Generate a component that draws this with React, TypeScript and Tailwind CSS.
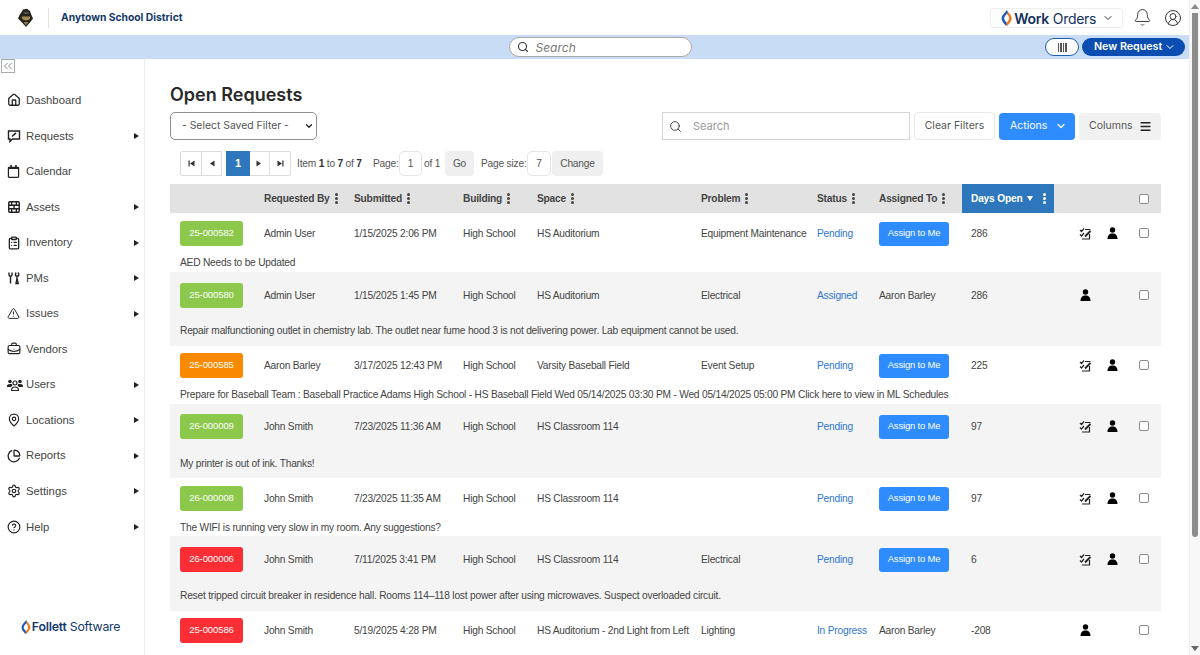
import React from "react"
import {
  House,
  BrickWall,
  ClipboardList,
  TriangleAlert,
  BriefcaseBusiness,
  MapPin,
  ChartPie,
  Settings,
  CircleHelp,
  Search,
  ChevronDown,
  ChevronsLeft,
  Bell,
  CircleUserRound,
  Menu,
} from "lucide-react"
import { FaRegCalendar } from "react-icons/fa"

const arial = "font-['Liberation_Sans',Arial,sans-serif]"
const inter = "font-['Inter',sans-serif]"
const gridCols = "grid grid-cols-[94px_90px_109px_74px_164px_116px_62px_83px_92px_76px_31px]"

const RequestIcon = () => (
  <svg width="14" height="14" viewBox="0 0 14 14" fill="none" stroke="#222" strokeWidth="1.4">
    <path d="M1.500 2h11v8H5.500L3 12.500V10H1.500z" />
    <path d="M5 7.500 9 3.800" strokeWidth="1.600" />
  </svg>
)

const WrenchIcon = () => (
  <svg width="14" height="14" viewBox="0 0 14 14" fill="none" stroke="#222" strokeWidth="1.400">
    <path d="M2 1.500v2.200c0 1 .7 1.500 1.500 1.500S5 4.700 5 3.700V1.500M3.500 5.200v7.300" />
    <path d="M9 1.500 8.400 3.500c0 1 .7 1.800 1.600 1.800s1.800-.8 1.800-1.800L11.200 1.500M10 5.300v2.200l-1 5h2.200l-1.200-5" />
  </svg>
)

const UsersIcon = () => (
  <svg width="16" height="14" viewBox="0 0 16 14" fill="#222">
    <circle cx="3" cy="3.500" r="1.800" />
    <circle cx="13" cy="3.500" r="1.800" />
    <path d="M0 8.500c0-1.800 1-2.500 3-2.500s2.500.6 2.500 1.200L4 9H0zM16 8.500c0-1.800-1-2.500-3-2.500s-2.500.6-2.500 1.200L12 9h4z" />
    <circle cx="8" cy="5" r="2" fill="none" stroke="#222" strokeWidth="1.200" />
    <path d="M4.500 12.500c0-2.500 1.500-3.500 3.500-3.500s3.500 1 3.500 3.500z" fill="none" stroke="#222" strokeWidth="1.200" />
  </svg>
)

const FlameLogo = ({ h }: { h: number }) => (
  <svg width={h * 0.7} height={h} viewBox="0 0 11 16">
    <path d="M6 0C3.500 3 .5 5.500.5 8.500.5 11 3 14 5 16l1.500-2.500C5 12 3 10.300 3 8.500 3 6.500 5 4.500 7 3z" fill="#1e5bb8" />
    <path d="M5.500 3.500 7 2c2 2 3.500 4 3.500 6.500S8 14 6 16l-1-2.500C6.500 12 8 10.300 8 8.500 8 6.500 6.800 5 5.500 3.500z" fill="#f2791f" />
  </svg>
)

const navItems = [
  { label: "Dashboard", icon: <House size={14} strokeWidth={2.200} />, arrow: false },
  { label: "Requests", icon: <RequestIcon />, arrow: true },
  { label: "Calendar", icon: <FaRegCalendar size={13} />, arrow: false },
  { label: "Assets", icon: <BrickWall size={14} strokeWidth={2.400} />, arrow: true },
  { label: "Inventory", icon: <ClipboardList size={14} strokeWidth={2.200} />, arrow: true },
  { label: "PMs", icon: <WrenchIcon />, arrow: true },
  { label: "Issues", icon: <TriangleAlert size={13} strokeWidth={1.800} />, arrow: true },
  { label: "Vendors", icon: <BriefcaseBusiness size={14} strokeWidth={2} />, arrow: false },
  { label: "Users", icon: <UsersIcon />, arrow: true },
  { label: "Locations", icon: <MapPin size={14} strokeWidth={2} />, arrow: true },
  { label: "Reports", icon: <ChartPie size={14} strokeWidth={2.200} />, arrow: true },
  { label: "Settings", icon: <Settings size={14} strokeWidth={2} />, arrow: true },
  { label: "Help", icon: <CircleHelp size={14} strokeWidth={2} />, arrow: true },
]

const requests = [
  { id: "25-000582", color: "bg-[#8cc84b]", by: "Admin User", date: "1/15/2025 2:06 PM", space: "HS Auditorium", problem: "Equipment Maintenance", status: "Pending", assigned: "", days: "286", note: "AED Needs to be Updated", row: "h-[59px] pt-2", gap: "mt-[9px]" },
  { id: "25-000580", color: "bg-[#8cc84b]", by: "Admin User", date: "1/15/2025 1:45 PM", space: "HS Auditorium", problem: "Electrical", status: "Assigned", assigned: "Aaron Barley", days: "286", note: "Repair malfunctioning outlet in chemistry lab. The outlet near fume hood 3 is not delivering power. Lab equipment cannot be used.", row: "h-[74px] pt-[11px] bg-[#f4f4f4]", gap: "mt-[15px]" },
  { id: "25-000585", color: "bg-[#f98a00]", by: "Aaron Barley", date: "3/17/2025 12:43 PM", space: "Varsity Baseball Field", problem: "Event Setup", status: "Pending", assigned: "", days: "225", note: "Prepare for Baseball Team : Baseball Practice Adams High School - HS Baseball Field Wed 05/14/2025 03:30 PM - Wed 05/14/2025 05:00 PM Click here to view in ML Schedules", row: "h-[58px] pt-[7px]", gap: "mt-[9px]" },
  { id: "26-000009", color: "bg-[#8cc84b]", by: "John Smith", date: "7/23/2025 11:36 AM", space: "HS Classroom 114", problem: "", status: "Pending", assigned: "", days: "97", note: "My printer is out of ink. Thanks!", row: "h-[74px] pt-[10px] bg-[#f4f4f4]", gap: "mt-[17px]" },
  { id: "26-000008", color: "bg-[#8cc84b]", by: "John Smith", date: "7/23/2025 11:35 AM", space: "HS Classroom 114", problem: "", status: "Pending", assigned: "", days: "97", note: "The WIFI is running very slow in my room. Any suggestions?", row: "h-[58px] pt-2", gap: "mt-[9px]" },
  { id: "26-000006", color: "bg-[#fb2d35]", by: "John Smith", date: "7/11/2025 3:41 PM", space: "HS Classroom 114", problem: "Electrical", status: "Pending", assigned: "", days: "6", note: "Reset tripped circuit breaker in residence hall. Rooms 114–118 lost power after using microwaves. Suspect overloaded circuit.", row: "h-[75px] pt-[11px] bg-[#f4f4f4]", gap: "mt-4" },
  { id: "25-000586", color: "bg-[#fb2d35]", by: "John Smith", date: "5/19/2025 4:28 PM", space: "HS Auditorium - 2nd Light from Left", problem: "Lighting", status: "In Progress", assigned: "Aaron Barley", days: "-208", note: "", row: "h-[44px] pt-[7px]", gap: "mt-0" },
]

const Dots = ({ color = "bg-[#444]", className = "ml-[5px]" }: { color?: string; className?: string }) => (
  <span className={`inline-flex flex-col gap-[1.500px] align-middle ${className}`}>
    <span className={`w-[3px] h-[2.500px] rounded-full ${color}`} />
    <span className={`w-[3px] h-[2.500px] rounded-full ${color}`} />
    <span className={`w-[3px] h-[2.500px] rounded-full ${color}`} />
  </span>
)

const Header = ({ label }: { label: string }) => (
  <div className="flex items-center text-[10.200px] tracking-[-0.2px] font-bold text-[#444]">
    {label}
    <Dots />
  </div>
)

const Check = () => <span className="block w-[10px] h-[10px] border border-[#8b8b8b] rounded-[2px] bg-white" />

const PersonIcon = () => (
  <svg width="11" height="12" viewBox="0 0 11 12" fill="#000">
    <circle cx="5.500" cy="3" r="2.700" />
    <path d="M0.500 12c0-3.500 1.800-5.500 5-5.500s5 2 5 5.500z" />
  </svg>
)

const TaskIcon = () => (
  <svg width="13" height="13" viewBox="0 0 13 13" fill="none" stroke="#222" strokeWidth="1.200">
    <path d="M1 3 2.500 4.500 5 1.500M6 2.500h5.500M1 7.500 2.500 9 5 6" />
    <path d="M3 12h7.500V7" />
    <path d="M6 9.500 11.500 3.800" strokeWidth="1.900" />
  </svg>
)

const PagerGlyph = ({ dir, bar }: { dir: "left" | "right"; bar?: boolean }) => (
  <svg width="7" height="7" viewBox="0 0 7 7" fill="#333">
    {dir === "left" ? <path d="M6.500 0.500v6L2 3.500z" /> : <path d="M.5 0.500v6L5 3.500z" />}
    {bar && (dir === "left" ? <path d="M.5 .5h1.200v6H.5z" /> : <path d="M5.300 .5h1.200v6H5.300z" />)}
  </svg>
)

const Pager = ({ children, className = "" }: { children: React.ReactNode; className?: string }) => (
  <div className={`h-[25px] flex items-center justify-center border border-[#dcdcdc] ${className}`}>
    {children}
  </div>
)

export default function App() {
  return (
    <div className={`w-[1200px] h-[655px] overflow-hidden flex bg-white ${arial}`}>
      <div className="w-[1189px] flex flex-col">
        {/* top header */}
        <div className="h-[35px] flex items-center pl-[17px] pr-[7px]">
          <svg width="18" height="20" viewBox="0 0 18 20">
            <path d="M4 5 6 1.500l4-.8 3 2.300 1 3 2 4.500-3 4-4 4.500-4-4.500-4-4 2-4.500z" fill="#26231d" />
            <path d="M4.500 8.500h9l-1 3-3.500 1-3.500-1z" fill="#a08a55" />
            <path d="M6.500 14h5L9 17.500z" fill="#8d7a4a" />
            <path d="M6.500 4h5v2h-5z" fill="#57513f" />
          </svg>
          <div className="w-px h-[20px] bg-[#e3e3e3] ml-[13px]" />
          <div className={`ml-[12px] text-[10.300px] font-bold text-[#14386b] ${inter}`}>Anytown School District</div>
          <div className={`ml-auto w-[133px] h-[20px] mt-[1px] border border-[#eeeeee] rounded-[3px] flex items-center pl-[10px] ${inter}`}>
            <FlameLogo h={16} />
            <span className="ml-[2px] text-[14px] tracking-[-0.3px] font-semibold text-[#12305c]">Work</span>
            <span className="ml-[4px] text-[14px] tracking-[-0.3px] text-[#12305c]">Orders</span>
            <ChevronDown size={12} className="ml-[6px] text-[#333]" />
          </div>
          <Bell size={19} strokeWidth={1.200} className="ml-[10px] text-[#333]" />
          <CircleUserRound size={18} strokeWidth={1.300} className="ml-[12px] text-[#333]" />
        </div>
        {/* search bar */}
        <div className="h-[24px] bg-[#c9dcf5] relative flex items-center justify-center">
          <div className={`w-[183px] h-[20px] rounded-full bg-white border border-[#a8a8a8] flex items-center pl-[7px] ml-[11px] ${inter}`}>
            <Search size={12} strokeWidth={2.200} className="text-[#333]" />
            <span className="ml-[7px] mt-[2px] text-[12px] italic text-[#777]">Search</span>
          </div>
          <div className="absolute right-[4px] top-[3px] flex items-center gap-[3px]">
            <div className="w-[34px] h-[18px] rounded-full bg-white border border-[#1f5fae] flex justify-center items-center">
              <div className="flex gap-px">
                <span className="w-[1.500px] h-[9px] bg-[#555]" />
                <span className="w-[1.500px] h-[9px] bg-[#555]" />
                <span className="w-[1.500px] h-[9px] bg-[#555]" />
                <span className="w-[1.500px] h-[9px] bg-[#555]" />
              </div>
            </div>
            <div className={`w-[103px] h-[18px] rounded-full bg-[#0b4db0] text-white text-[10.700px] font-semibold flex items-center pl-[12px] ${inter}`}>
              New Request
              <ChevronDown size={12} strokeWidth={2} className="ml-[2px]" />
            </div>
          </div>
        </div>
        <div className="flex-1 flex min-h-0">
          {/* sidebar */}
          <div className="w-[145px] border-r border-[#ececec] flex flex-col relative shrink-0">
            <div className="w-[14px] h-[14px] border border-[#aaa] text-[#666] flex items-center justify-center ml-px">
              <ChevronsLeft size={14} strokeWidth={1.300} className="shrink-0" />
            </div>
            <div className="mt-[9.700px] flex flex-col">
              {navItems.map((n) => (
                <div key={n.label} className="h-[35.560px] flex items-center pl-[7px] text-[11.300px] text-[#444]">
                  <span className="w-[19px] flex text-[#222]">{n.icon}</span>
                  <span>{n.label}</span>
                  {n.arrow && <span className="ml-auto mr-[5px] border-l-[5px] border-l-[#222] border-y-[3px] border-y-transparent" />}
                </div>
              ))}
            </div>
            <div className={`absolute left-[21px] top-[559px] flex items-center text-[#14386b] ${inter}`}>
              <FlameLogo h={14} />
              <span className="ml-[1px] text-[12.300px] font-semibold tracking-[-0.2px]">Follett</span>
              <span className="ml-[3px] text-[12.300px] tracking-[-0.2px]">Software</span>
            </div>
          </div>
          {/* main content */}
          <div className="flex-1 pl-[25px] pr-[28px] min-w-0">
            <div className={`mt-[24px] text-[18px] leading-[23px] font-semibold text-[#2a2a2a] ${inter}`}>Open Requests</div>
            <div className="mt-[6px] flex items-start">
              <div className={`w-[147px] h-[28px] border border-[#8f8f8f] rounded-[5px] flex items-center pl-[11px] whitespace-nowrap text-[10.400px] text-[#555] ${inter}`}>
                - Select Saved Filter -
                <ChevronDown size={10} strokeWidth={3} className="ml-auto mr-[2px] text-[#222]" />
              </div>
              <div className="ml-auto flex items-center">
                <div className={`w-[248px] h-[28px] border border-[#d6d6d6] flex items-center pl-[6px] text-[11px] text-[#999] ${inter}`}>
                  <Search size={13} strokeWidth={1.800} className="text-[#444]" />
                  <span className="ml-[11px]">Search</span>
                </div>
                <div className={`ml-[4px] w-[81px] h-[28px] border border-[#e8e8e8] rounded-[4px] flex items-center justify-center text-[10.500px] text-[#555] ${inter}`}>Clear Filters</div>
                <div className={`ml-[4px] w-[76px] h-[27px] rounded-[4px] bg-[#2e8cff] text-white flex items-center pl-[11px] text-[10.500px] ${inter}`}>
                  Actions
                  <ChevronDown size={12} strokeWidth={2.500} className="ml-[8px]" />
                </div>
                <div className={`ml-[4px] w-[82px] h-[27px] rounded-[4px] bg-[#f1f1f1] text-[#555] flex items-center pl-[10px] text-[10.500px] ${inter}`}>
                  Columns
                  <Menu size={13} strokeWidth={3} className="ml-[6px] text-[#222]" />
                </div>
              </div>
            </div>
            {/* pager */}
            <div className="mt-[11px] ml-[10px] h-[25px] flex items-center text-[10.200px] tracking-[-0.2px] text-[#555]">
              <div className="flex">
                <Pager className="w-[22px] rounded-l-[2px]"><PagerGlyph dir="left" bar /></Pager>
                <Pager className="w-[21px] -ml-px"><PagerGlyph dir="left" /></Pager>
                <div className="w-[24px] h-[25px] ml-[4px] flex items-center justify-center bg-[#2e77bc] text-white text-[11px] font-bold">1</div>
                <Pager className="w-[20px] border-l-0"><PagerGlyph dir="right" /></Pager>
                <Pager className="w-[22px] -ml-px rounded-r-[2px]"><PagerGlyph dir="right" bar /></Pager>
              </div>
              <span className="ml-[6px] w-[65px] whitespace-nowrap">Item <b className="text-[#333]">1</b> to <b className="text-[#333]">7</b> of <b className="text-[#333]">7</b></span>
              <span className="ml-[11px] w-[26px]">Page:</span>
              <span className="w-[23px] h-[25px] border border-[#e4e4e4] rounded-[5px] flex items-center justify-center">1</span>
              <span className="ml-[2px] w-[17px] whitespace-nowrap">of 1</span>
              <span className="ml-[4px] w-[29px] h-[25px] rounded-[4px] bg-[#efefef] flex items-center justify-center">Go</span>
              <span className="ml-[7px] w-[45px] whitespace-nowrap">Page size:</span>
              <span className="ml-px w-[24px] h-[25px] border border-[#e4e4e4] rounded-[5px] flex items-center justify-center">7</span>
              <span className="ml-px w-[51px] h-[25px] rounded-[4px] bg-[#efefef] flex items-center justify-center">Change</span>
            </div>
            {/* table */}
            <div className={`mt-[8px] h-[29px] bg-[#e2e2e2] items-center ${gridCols}`}>
              <div />
              <Header label="Requested By" />
              <Header label="Submitted" />
              <Header label="Building" />
              <Header label="Space" />
              <Header label="Problem" />
              <Header label="Status" />
              <Header label="Assigned To" />
              <div className="h-full bg-[#2e77bc] flex items-center pl-[9px] text-[10.200px] tracking-[-0.2px] font-bold text-white">
                Days Open
                <span className="ml-[5px] border-t-[5px] border-t-white border-x-[3.500px] border-x-transparent" />
                <Dots color="bg-white" className="ml-[10px]" />
              </div>
              <div />
              <div className="pl-[9px]"><Check /></div>
            </div>
            {requests.map((r) => (
              <div key={r.id} className={`${r.row} text-[10.200px] tracking-[-0.21px] text-[#444]`}>
                <div className={`${gridCols} items-center`}>
                  <div className={`ml-[10px] w-[63px] h-[25px] rounded-[3px] ${r.color} text-white text-[9.500px] tracking-[-0.1px] flex items-center justify-center`}>{r.id}</div>
                  <div>{r.by}</div>
                  <div>{r.date}</div>
                  <div>High School</div>
                  <div>{r.space}</div>
                  <div>{r.problem}</div>
                  <div className="text-[#2e77d0]">{r.status}</div>
                  <div>
                    {r.assigned || (
                      <div className="w-[70px] h-[24px] rounded-[3px] bg-[#2e8cff] text-white text-[9.500px] tracking-[-0.2px] flex items-center justify-center">Assign to Me</div>
                    )}
                  </div>
                  <div className="pl-[9px]">{r.days}</div>
                  <div className="flex items-center pl-[25px] mb-px">
                    {r.assigned === "" && <span className="w-[27px]"><TaskIcon /></span>}
                    <span className="ml-px"><PersonIcon /></span>
                  </div>
                  <div className="pl-[9px] mb-px"><Check /></div>
                </div>
                {r.note && <div className={`${r.gap} ml-[10px] leading-[16px]`}>{r.note}</div>}
              </div>
            ))}
          </div>
        </div>
      </div>
      {/* scrollbar */}
      <div className="w-[11px] h-full bg-[#f8f8f8] border-l border-[#eeeeee] flex flex-col items-center shrink-0">
        <span className="mt-[4px] border-b-[5px] border-b-[#888] border-x-[4px] border-x-transparent" />
        <div className="mt-[4px] w-[6px] h-[524px] rounded-b-[3px] bg-[#8c8c8c]" />
        <span className="mt-auto mb-[4px] border-t-[5px] border-t-[#666] border-x-[4px] border-x-transparent" />
      </div>
    </div>
  )
}
